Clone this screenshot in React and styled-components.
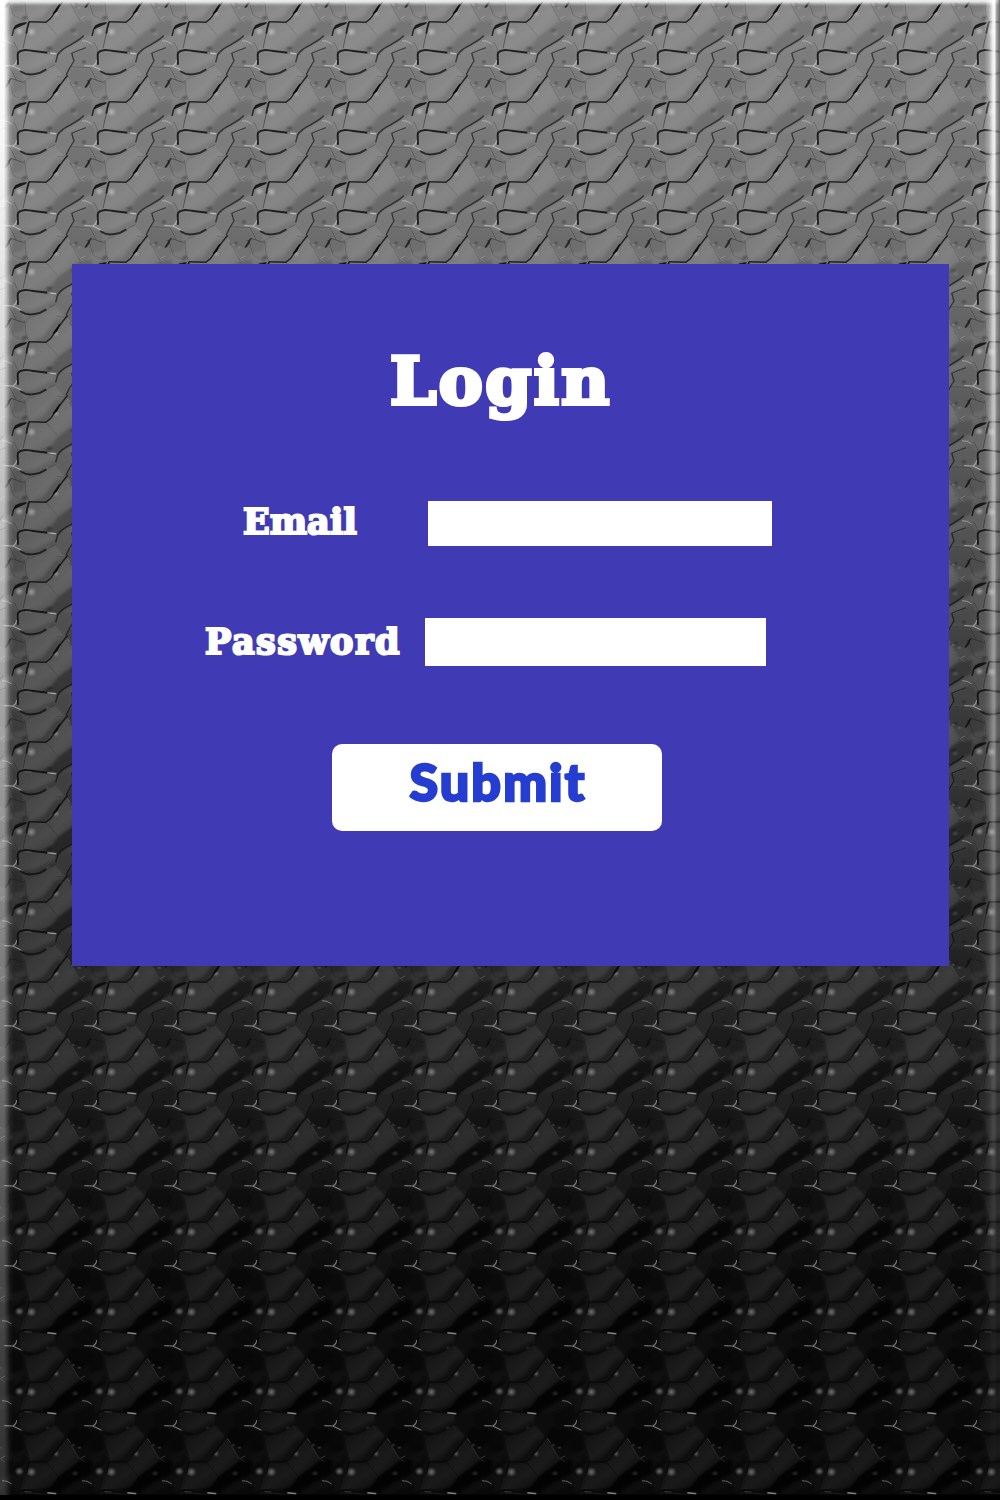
import React from "react";
import styled, { createGlobalStyle } from "styled-components";

const GlobalStyle = createGlobalStyle`
  * { box-sizing: border-box; }
  body { margin: 0; background: #111; }
`;

const Page = styled.main`
  position: relative;
  width: 1000px;
  height: 1500px;
  padding: 264px 51px 0 72px;
  overflow: hidden;
`;

const Backdrop = styled.div`
  position: absolute;
  inset: 0;
  z-index: -1;
  background: linear-gradient(#888 0, #808080 200px, #6c6c6c 400px, #383838 920px, #232323 1140px, #131313 1300px, #0e0e0e 1500px);

  svg { display: block; }
`;

const Bevel = styled.div`
  position: absolute;
  inset: 0;
  background:
    linear-gradient(to top, #000 5px, transparent 6px),
    linear-gradient(#eef0ef 0, #eef0efdd 2px, #eef0ef55 4px, transparent 6px);

  &::before, &::after {
    content: "";
    position: absolute;
    top: 0;
    bottom: 5px;
  }
  &::before {
    left: 0;
    width: 14px;
    background: linear-gradient(to right, #fff 4px, #ffffffa0 7px, #ffffff30 10px, transparent 14px);
    mask-image: linear-gradient(#000 0, rgba(0,0,0,.93) 150px, rgba(0,0,0,.62) 500px, rgba(0,0,0,.42) 950px, rgba(0,0,0,.25) 1300px, rgba(0,0,0,.17) 1500px);
  }
  &::after {
    right: 0;
    width: 16px;
    background: linear-gradient(to right, transparent 0, #ffffff50 5px, #fffffff0 9px, #fffffff0 11px, #c4c4c4aa 12px, #88888899 14px, #666 16px);
    mask-image: linear-gradient(#000 0, rgba(0,0,0,.9) 150px, rgba(0,0,0,.5) 500px, rgba(0,0,0,.22) 950px, rgba(0,0,0,.05) 1300px, transparent 1500px);
  }
`;

const Panel = styled.form`
  display: flex;
  flex-direction: column;
  height: 702px;
  padding-top: 77px;
  background: #403ab5;
`;

const Title = styled.h1`
  height: 80px;
  margin: 0 0 80px;
  padding-left: 318px;
  color: #fff;
  font: 700 66px/80px "DejaVu Serif", serif;
  letter-spacing: 2.4px;
  -webkit-text-stroke: 4px #fff;
`;

const Field = styled.div`
  display: flex;
  align-items: center;
  height: ${(p) => p.$height}px;
  margin-bottom: ${(p) => p.$gap}px;
  padding-left: ${(p) => p.$indent}px;
`;

const Label = styled.label`
  flex: none;
  width: ${(p) => p.$width}px;
  padding-bottom: ${(p) => p.$lift}px;
  color: #fff;
  font: 700 35px/44px "DejaVu Serif", serif;
  letter-spacing: ${(p) => p.$tracking}px;
  -webkit-text-stroke: 2.2px #fff;
`;

const Input = styled.input`
  width: ${(p) => p.$width}px;
  height: 100%;
  padding: 0 12px;
  border: 0;
  border-radius: 0;
  outline: 0;
  background: #fff;
  font: 24px "Lato", sans-serif;
`;

const Submit = styled.button`
  width: 330px;
  height: 87px;
  margin-left: 260px;
  padding: 0 0 13px;
  border: 0;
  border-radius: 10px;
  background: #fff;
  color: #253dd0;
  font: 900 52px/74px "Lato", sans-serif;
  letter-spacing: 2.1px;
  text-indent: 2px;
  -webkit-text-stroke: 2.4px #253dd0;
`;

const TILE = 240;
const WRAPS = [-TILE, 0, TILE].flatMap((x) => [-TILE, 0, TILE].map((y) => [x, y]));

function Tiled({ children }) {
  return WRAPS.map(([x, y]) => (
    <g key={`${x},${y}`} transform={`translate(${x} ${y})`}>{children}</g>
  ));
}

function Facets() {
  return (
    <>
      <path d="M175 110L240 62 278 60 276 100 245 118 195 147 172 166 120 152 150 142Z" />
      <path d="M215 160L258 144 270 125 292 162 280 198 220 198Z" opacity=".5" />
      <path d="M195 228L213 200 270 204 275 238 247 264 217 260Z" opacity=".75" />
      <path d="M275 204L302 214 315 250 312 270 276 280 262 250Z" opacity=".6" />
      <path d="M210 5L238 10 268 0 282 35 255 66 240 62Z" opacity=".35" />
      <path d="M137 66L165 32 190 0 200 -10 165 2 130 50 88 64Z" opacity=".75" />
      <path d="M36 106L44 75 75 55 80 68 52 80Z" opacity=".65" />
      <path d="M170 166L190 158 215 158 218 184 196 222 166 190Z" opacity=".25" />
      <path d="M62 210L105 208 165 180 168 192 130 214 105 225 80 227Z" opacity=".55" />
    </>
  );
}

function Cracks() {
  return (
    <g fill="none" strokeLinejoin="round">
      <g stroke="#080808">
        <path d="M203 -14L190 2 166 35 152 55 137 67 86 65" strokeWidth="4.5" opacity=".75" />
        <path d="M179 13L160 40 170 33Z" fill="#000" strokeWidth="4" opacity=".85" />
        <path d="M80 68L62 71 48 77 41 88 36 108" strokeWidth="4.5" opacity=".75" />
        <path d="M76 71L57 74 46 80 43 86Z" fill="#000" strokeWidth="3" opacity=".8" />
        <path d="M87 66L82 84 79 101" strokeWidth="5.5" opacity=".8" />
        <path d="M79 100L69 145" strokeWidth="3" opacity=".4" />
        <path d="M54 194L53 164Q53 152 75 150L125 156 151 159" strokeWidth="6" opacity=".8" />
        <path d="M167 187L173 165Q184 147 211 135L240 117 251 107" strokeWidth="4.5" opacity=".6" />
        <path d="M60 213Q80 227 104 222 122 220 139 208" strokeWidth="6" opacity=".7" />
        <path d="M139 208L165 194" strokeWidth="2" opacity=".35" />
        <path d="M215 160L236 151 258 143" strokeWidth="3.5" opacity=".55" />
        <path d="M215 159L222 183 210 202 198 225" strokeWidth="4" opacity=".6" />
        <path d="M255 263L273 235" strokeWidth="5" opacity=".65" />
        <path d="M273 235L309 247 315 242" strokeWidth="2.5" opacity=".4" />
        <path d="M209 5L225 36 240 60" strokeWidth="2.5" opacity=".3" />
        <path d="M268 8L280 46 314 62M315 5L318 45 326 62" strokeWidth="2" opacity=".25" />
        <path d="M193 231L169 229M314 251L322 236 345 229" strokeWidth="2" opacity=".25" />
        <path d="M282 126Q295 144 293 165M213 200L270 203 289 240" strokeWidth="2.5" opacity=".27" />
        <path d="M137 67L176 110M164 192L196 230" strokeWidth="1.5" opacity=".2" />
        <path d="M258 22L268 8 263 0" strokeWidth="4" opacity=".5" />
      </g>
      <g stroke="#fff">
        <path d="M253 197L278 198 302 209M279 197Q290 192 290 180" strokeWidth="3.5" opacity=".42" />
        <path d="M246 122Q262 121 275 132" strokeWidth="3" opacity=".35" />
        <path d="M142 158L169 161" strokeWidth="4.5" opacity=".5" />
        <path d="M74 155L95 156M68 213L58 209" strokeWidth="2" opacity=".25" />
        <path d="M215 19L237 54 255 66M171 42L164 45" strokeWidth="2" opacity=".15" />
        <path d="M202 236L211 248M242 55L255 48" strokeWidth="3" opacity=".18" />
      </g>
    </g>
  );
}

function Glints() {
  return (
    <>
      <ellipse cx="58" cy="94" rx="14" ry="13" fill="url(#glint)" opacity=".75" />
      <ellipse cx="94" cy="96" rx="16" ry="15" fill="url(#glint)" opacity=".75" />
      <ellipse cx="169" cy="40" rx="10" ry="12" fill="url(#glint)" opacity=".5" />
      <ellipse cx="225" cy="100" rx="12" ry="9" fill="url(#glint)" opacity=".3" />
      <ellipse cx="220" cy="92" rx="13" ry="11" fill="url(#dent)" opacity=".55" />
      <ellipse cx="148" cy="145" rx="14" ry="10" fill="url(#dent)" opacity=".75" />
      <ellipse cx="74" cy="53" rx="12" ry="9" fill="url(#dent)" opacity=".8" />
      <ellipse cx="252" cy="186" rx="11" ry="9" fill="url(#dent)" opacity=".7" />
      <ellipse cx="228" cy="249" rx="9" ry="8" fill="url(#dent)" opacity=".6" />
      <ellipse cx="220" cy="255" rx="8" ry="6" fill="url(#glint)" opacity=".35" />
      <ellipse cx="238" cy="263" rx="9" ry="5" fill="url(#glint)" opacity=".35" />
      <ellipse cx="143" cy="203" rx="7" ry="6" fill="url(#glint)" opacity=".2" />
    </>
  );
}

function StoneTexture() {
  return (
    <svg width="1000" height="1500" aria-hidden="true">
      <defs>
        <radialGradient id="glint">
          <stop offset="0" stopColor="#fff" stopOpacity=".5" />
          <stop offset="1" stopColor="#fff" stopOpacity="0" />
        </radialGradient>
        <radialGradient id="dent">
          <stop offset="0" stopColor="#000" stopOpacity=".4" />
          <stop offset="1" stopColor="#000" stopOpacity="0" />
        </radialGradient>
        <linearGradient id="bulge" x1="0" y1="0" x2="1" y2="1">
          <stop offset="0" stopColor="#000" stopOpacity=".05" />
          <stop offset=".55" stopColor="#fff" stopOpacity=".05" />
          <stop offset="1" stopColor="#000" stopOpacity=".04" />
        </linearGradient>
        <linearGradient id="depth" x2="0" y2="1">
          <stop offset="0" stopColor="#fff" stopOpacity=".13" />
          <stop offset=".3" stopColor="#fff" stopOpacity=".2" />
          <stop offset=".65" stopColor="#fff" stopOpacity=".45" />
          <stop offset=".85" stopColor="#fff" stopOpacity=".8" />
        </linearGradient>
        <mask id="depthMask" maskUnits="userSpaceOnUse" x="0" y="0" width="1000" height="1500">
          <rect width="1000" height="1500" fill="url(#depth)" />
        </mask>
        <filter id="soft" filterUnits="userSpaceOnUse" x="-40" y="-40" width="320" height="320">
          <feGaussianBlur stdDeviation="4" />
        </filter>
        <pattern id="facets" width="80" height="80" patternUnits="userSpaceOnUse" viewBox="0 0 240 240">
          <g filter="url(#soft)"><Tiled><Facets /></Tiled></g>
        </pattern>
        <pattern id="cracks" width="80" height="80" patternUnits="userSpaceOnUse" viewBox="0 0 240 240">
          <Tiled>
            <path d="M88 68L137 68 175 110 150 144 62 148Z" fill="url(#bulge)" />
            <path d="M140 65L203 -8 240 60 176 109Z" fill="url(#bulge)" />
            <path d="M58 156L164 162 164 190 105 220 62 210Z" fill="url(#bulge)" />
            <path d="M75 245L82 230 164 195 195 230 140 302 90 302Z" fill="url(#bulge)" />
            <Glints />
            <Cracks />
          </Tiled>
        </pattern>
      </defs>
      <rect width="1000" height="1500" fill="url(#facets)" mask="url(#depthMask)" />
      <rect width="1000" height="1500" fill="url(#cracks)" />
    </svg>
  );
}

export default function App() {
  return (
    <>
      <GlobalStyle />
      <Page>
        <Backdrop>
          <StoneTexture />
          <Bevel />
        </Backdrop>
        <Panel onSubmit={(e) => e.preventDefault()}>
          <Title>Login</Title>
          <Field $height={45} $gap={72} $indent={171}>
            <Label htmlFor="email" $width={185} $tracking={0.2} $lift={4}>Email</Label>
            <Input id="email" type="email" $width={344} />
          </Field>
          <Field $height={48} $gap={78} $indent={133}>
            <Label htmlFor="password" $width={220} $tracking={1.5} $lift={0}>Password</Label>
            <Input id="password" type="password" $width={341} />
          </Field>
          <Submit type="submit">Submit</Submit>
        </Panel>
      </Page>
    </>
  );
}
